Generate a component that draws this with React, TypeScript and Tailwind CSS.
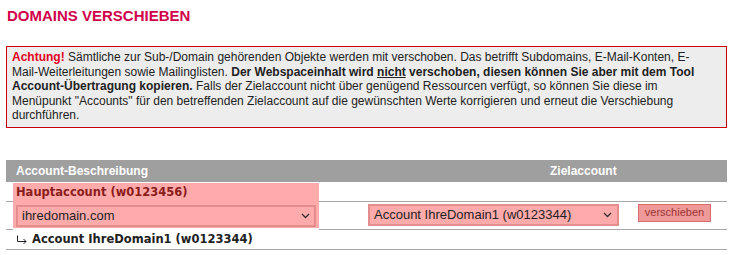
import React from "react";

function Chevron() {
  return (
    <svg width="9" height="6" viewBox="0 0 9 6" className="shrink-0">
      <path d="M1 1 L4.5 4.5 L8 1" fill="none" stroke="#333" strokeWidth="1.3" />
    </svg>
  );
}

function SubArrow() {
  return (
    <svg width="11" height="9" viewBox="0 0 11 9" className="shrink-0">
      <path d="M1.5 0.5 V6.5 H10" fill="none" stroke="#222" strokeWidth="1" />
      <path d="M7.5 4 L10 6.5 L7.5 9" fill="none" stroke="#222" strokeWidth="1" />
    </svg>
  );
}

export default function App() {
  return (
    <div className="w-[730px] h-[255px] bg-white pl-[6px] pr-[3px] font-['Liberation_Sans',Arial,sans-serif] text-[#222]">
      {/* Title */}
      <h1 className="pt-[7px] pl-[1px] text-[15px] leading-[17px] font-bold text-[#d1004a]">
        DOMAINS VERSCHIEBEN
      </h1>

      {/* Warning */}
      <div className="mt-[22px] border border-[#cc0000] bg-[#ededed] pl-[5px] pt-[3px] pb-[4px] text-[12px] leading-[14.5px] whitespace-nowrap">
        <b className="text-[#e3001b]">Achtung!</b> Sämtliche zur Sub-/Domain gehörenden Objekte werden mit verschoben. Das betrifft Subdomains, E-Mail-Konten, E-
        <br />
        Mail-Weiterleitungen sowie Mailinglisten.{" "}
        <b>
          Der Webspaceinhalt wird <u>nicht</u> verschoben, diesen können Sie aber mit dem Tool
        </b>
        <br />
        <b>Account-Übertragung kopieren.</b> Falls der Zielaccount nicht über genügend Ressourcen verfügt, so können Sie diese im
        <br />
        Menüpunkt "Accounts" für den betreffenden Zielaccount auf die gewünschten Werte korrigieren und erneut die Verschiebung
        <br />
        durchführen.
      </div>

      {/* Table */}
      <div className="mt-[32px]">
        <div className="grid grid-cols-[356px_270px_1fr] h-[22px] bg-[#9f9f9f] text-white text-[12px] font-bold items-center">
          <div className="pl-[10px]">Account-Beschreibung</div>
          <div className="pl-[188px]">Zielaccount</div>
          <div />
        </div>

        <div className="grid grid-cols-[356px_270px_1fr] grid-rows-[20px_28px_20px]">
          {/* Highlighted main account cell, spans two rows */}
          <div className="row-span-2 flex">
            <div className="w-[7px] flex flex-col">
              <div className="h-[20px] border-b border-[#a8a8a8]" />
              <div className="flex-1 border-b border-[#a8a8a8]" />
            </div>
            <div className="w-[306px] mt-[1px] mb-[2px] bg-[#ffabab] flex flex-col">
              <div className="h-[19px] pl-[3px] pt-[1px] flex items-center font-['DejaVu_Sans',Verdana,sans-serif] font-bold text-[11.5px] text-[#8a1c1c]">
                Hauptaccount (w0123456)
              </div>
              <div className="pl-[3px] pr-[3px] pt-[3px]">
                <div className="h-[22px] border-2 border-[#e38d8d] bg-[#ffabab] flex items-center justify-between pl-[4px] pr-[4px] text-[13px] text-[#222]">
                  <span>ihredomain.com</span>
                  <Chevron />
                </div>
              </div>
            </div>
            <div className="flex-1 flex flex-col">
              <div className="h-[20px] border-b border-[#a8a8a8]" />
              <div className="flex-1 border-b border-[#a8a8a8]" />
            </div>
          </div>

          <div className="col-span-2 border-b border-[#a8a8a8]" />

          <div className="border-b border-[#a8a8a8] pl-[6px] pt-[2px]">
            <div className="w-[251px] h-[22px] border-2 border-[#e38d8d] bg-[#ffabab] flex items-center justify-between pl-[4px] pr-[5px] text-[13px] text-[#222]">
              <span>Account IhreDomain1 (w0123344)</span>
              <Chevron />
            </div>
          </div>
          <div className="border-b border-[#a8a8a8] pl-[6px] pt-[2px]">
            <button className="block w-[73px] h-[18px] border border-[#d86c6c] bg-[#ef9999] text-[11px] leading-none text-[#9a3535]">
              verschieben
            </button>
          </div>

          <div className="col-span-3 border-b border-[#a8a8a8] pl-[10px] pt-[1px] flex items-center gap-[5px] font-['DejaVu_Sans',Verdana,sans-serif] text-[11.5px] text-[#222]">
            <SubArrow />
            <b>Account IhreDomain1 (w0123344)</b>
          </div>
        </div>
      </div>
    </div>
  );
}
